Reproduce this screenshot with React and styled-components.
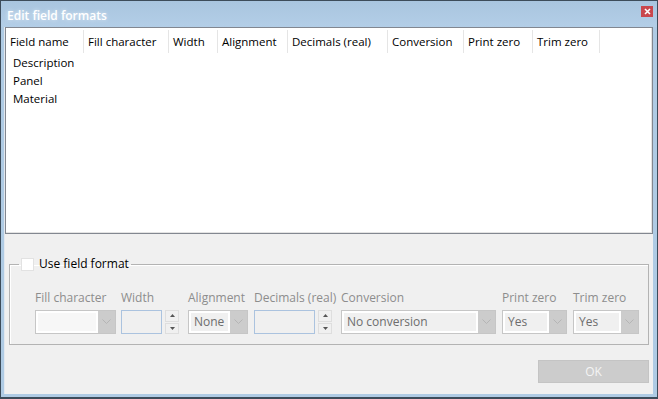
import React from "react";
import styled, { createGlobalStyle } from "styled-components";

const GlobalStyle = createGlobalStyle`
  html, body {
    margin: 0;
    padding: 0;
    background: #f0f0f0;
  }
  body {
    font-family: "Open Sans", "Noto Sans", sans-serif;
    font-size: 11.5px;
    color: #000;
  }
  * {
    box-sizing: border-box;
  }
`;

const Window = styled.div`
  width: 658px;
  height: 399px;
  border: 1px solid #3d4c5a;
  border-bottom-width: 2px;
  background: #afcbe4;
  display: flex;
  flex-direction: column;
`;

const TitleBar = styled.div`
  height: 26px;
  display: flex;
  justify-content: space-between;
  align-items: flex-start;
  padding: 0 4px 0 6px;
  background: linear-gradient(#a9c5df, #b3cee7);
`;

const Title = styled.div`
  color: #fff;
  font-weight: 600;
  font-size: 12px;
  line-height: 14px;
  margin-top: 8px;
  text-shadow: 0 0 4px rgba(255, 255, 255, 0.6);
`;

const CloseButton = styled.div`
  width: 12px;
  height: 11px;
  margin-top: 5px;
  background: #c9474d;
  display: flex;
  align-items: center;
  justify-content: center;
`;

const Client = styled.div`
  flex: 1;
  margin: 0 4px 3px 3px;
  background: #f0f0f0;
  border-left: 1px solid #e3e8ee;
  display: flex;
  flex-direction: column;
`;

const ListBox = styled.div`
  height: 207px;
  background: #fff;
  border: 1px solid #828790;
  box-shadow: inset -1px -1px 0 #e3e3e3;
`;

const HeaderRow = styled.div`
  display: flex;
  height: 25px;
  padding-top: 2px;
`;

const HeaderCell = styled.div`
  width: ${(p) => p.$w}px;
  padding-left: 4px;
  border-right: 1px solid #e5e5e5;
  line-height: 23px;
  white-space: nowrap;
  overflow: hidden;
`;

const Row = styled.div`
  height: 18px;
  line-height: 19px;
  padding-left: 7px;
`;

const Group = styled.fieldset`
  margin: 23px 4px 0 4px;
  padding: 20px 8px 10px 25px;
  border: 1px solid #b3b3b3;
  box-shadow: inset 1px 1px 0 #fff;
  min-width: 0;
`;

const Legend = styled.legend`
  margin-left: -16px;
  padding: 0 2px;
  display: flex;
  align-items: center;
  gap: 5px;
  height: 14px;
  line-height: 14px;
  font-size: 12px;
`;

const CheckBox = styled.span`
  width: 13px;
  height: 13px;
  background: #fff;
  border: 1px solid #e2e2e2;
`;

const FieldGrid = styled.div`
  display: grid;
  grid-template-columns: 86px 67px 66px 87px 161px 71px 66px;
`;

const Field = styled.div`
  display: flex;
  flex-direction: column;
  gap: 5px;
`;

const Label = styled.div`
  color: #8d8d8d;
  line-height: 14px;
  white-space: nowrap;
  font-size: 12px;
`;

const Combo = styled.div`
  width: ${(p) => p.$w}px;
  height: 24px;
  display: flex;
  background: #cccccc;
  border: 1px solid #c6c6c6;
`;

const ComboText = styled.div`
  flex: 1;
  background: #fff;
  padding: 2px;
  display: flex;
`;

const ComboValue = styled.div`
  flex: 1;
  background: ${(p) => (p.$empty ? "#f7f7f7" : "#f0f0f0")};
  color: #6d6d6d;
  font-size: 12px;
  line-height: 18px;
  padding-left: 3px;
  white-space: nowrap;
`;

const DropButton = styled.div`
  width: 17px;
  display: flex;
  align-items: center;
  justify-content: center;
`;

const SpinWrap = styled.div`
  display: flex;
  gap: 3px;
`;

const SpinEdit = styled.div`
  width: ${(p) => p.$w}px;
  height: 24px;
  background: #f0f0f0;
  border: 1px solid #abc3df;
`;

const SpinButtons = styled.div`
  width: 14px;
  height: 24px;
  display: flex;
  flex-direction: column;
  gap: 1px;
`;

const SpinButton = styled.div`
  flex: 1;
  border: 1px solid #dedede;
  background: #f0f0f0;
  display: flex;
  align-items: center;
  justify-content: center;
`;

const Footer = styled.div`
  display: flex;
  justify-content: flex-end;
  margin: 15px 4px 0 0;
`;

const OkButton = styled.div`
  width: 111px;
  height: 23px;
  background: #cccccc;
  border: 1px solid #c4c4c4;
  color: #f4f4f4;
  font-size: 12px;
  display: flex;
  align-items: center;
  justify-content: center;
`;

const Chevron = () => (
  <svg width="9" height="6" viewBox="0 0 9 6">
    <path d="M0.5 0.5 L4.5 4.5 L8.5 0.5" fill="none" stroke="#b5b5b5" strokeWidth="1" />
  </svg>
);

const Arrow = ({ down }) => (
  <svg width="5" height="3" viewBox="0 0 5 3">
    <path d={down ? "M0 0 H5 L2.5 3 Z" : "M0 3 H5 L2.5 0 Z"} fill="#555" />
  </svg>
);

const ComboBox = ({ w, value }) => (
  <Combo $w={w}>
    <ComboText>
      <ComboValue $empty={!value}>{value}</ComboValue>
    </ComboText>
    <DropButton>
      <Chevron />
    </DropButton>
  </Combo>
);

const SpinBox = ({ w }) => (
  <SpinWrap>
    <SpinEdit $w={w} />
    <SpinButtons>
      <SpinButton>
        <Arrow />
      </SpinButton>
      <SpinButton>
        <Arrow down />
      </SpinButton>
    </SpinButtons>
  </SpinWrap>
);

const columns = [
  ["Field name", 78],
  ["Fill character", 85],
  ["Width", 49],
  ["Alignment", 70],
  ["Decimals (real)", 100],
  ["Conversion", 76],
  ["Print zero", 69],
  ["Trim zero", 67],
];

const rows = ["Description", "Panel", "Material"];

export default function App() {
  return (
    <>
      <GlobalStyle />
      <Window>
        <TitleBar>
          <Title>Edit field formats</Title>
          <CloseButton>
            <svg width="7" height="7" viewBox="0 0 7 7">
              <path d="M1 1 L6 6 M6 1 L1 6" stroke="#fff" strokeWidth="1.6" />
            </svg>
          </CloseButton>
        </TitleBar>
        <Client>
          <ListBox>
            <HeaderRow>
              {columns.map(([name, w]) => (
                <HeaderCell key={name} $w={w}>
                  {name}
                </HeaderCell>
              ))}
            </HeaderRow>
            {rows.map((r) => (
              <Row key={r}>{r}</Row>
            ))}
          </ListBox>

          <Group>
            <Legend>
              <CheckBox />
              Use field format
            </Legend>
            <FieldGrid>
              <Field>
                <Label>Fill character</Label>
                <ComboBox w={81} />
              </Field>
              <Field>
                <Label>Width</Label>
                <SpinBox w={41} />
              </Field>
              <Field>
                <Label>Alignment</Label>
                <ComboBox w={60} value="None" />
              </Field>
              <Field>
                <Label>Decimals (real)</Label>
                <SpinBox w={61} />
              </Field>
              <Field>
                <Label>Conversion</Label>
                <ComboBox w={155} value="No conversion" />
              </Field>
              <Field>
                <Label>Print zero</Label>
                <ComboBox w={65} value="Yes" />
              </Field>
              <Field>
                <Label>Trim zero</Label>
                <ComboBox w={66} value="Yes" />
              </Field>
            </FieldGrid>
          </Group>

          <Footer>
            <OkButton>OK</OkButton>
          </Footer>
        </Client>
      </Window>
    </>
  );
}
